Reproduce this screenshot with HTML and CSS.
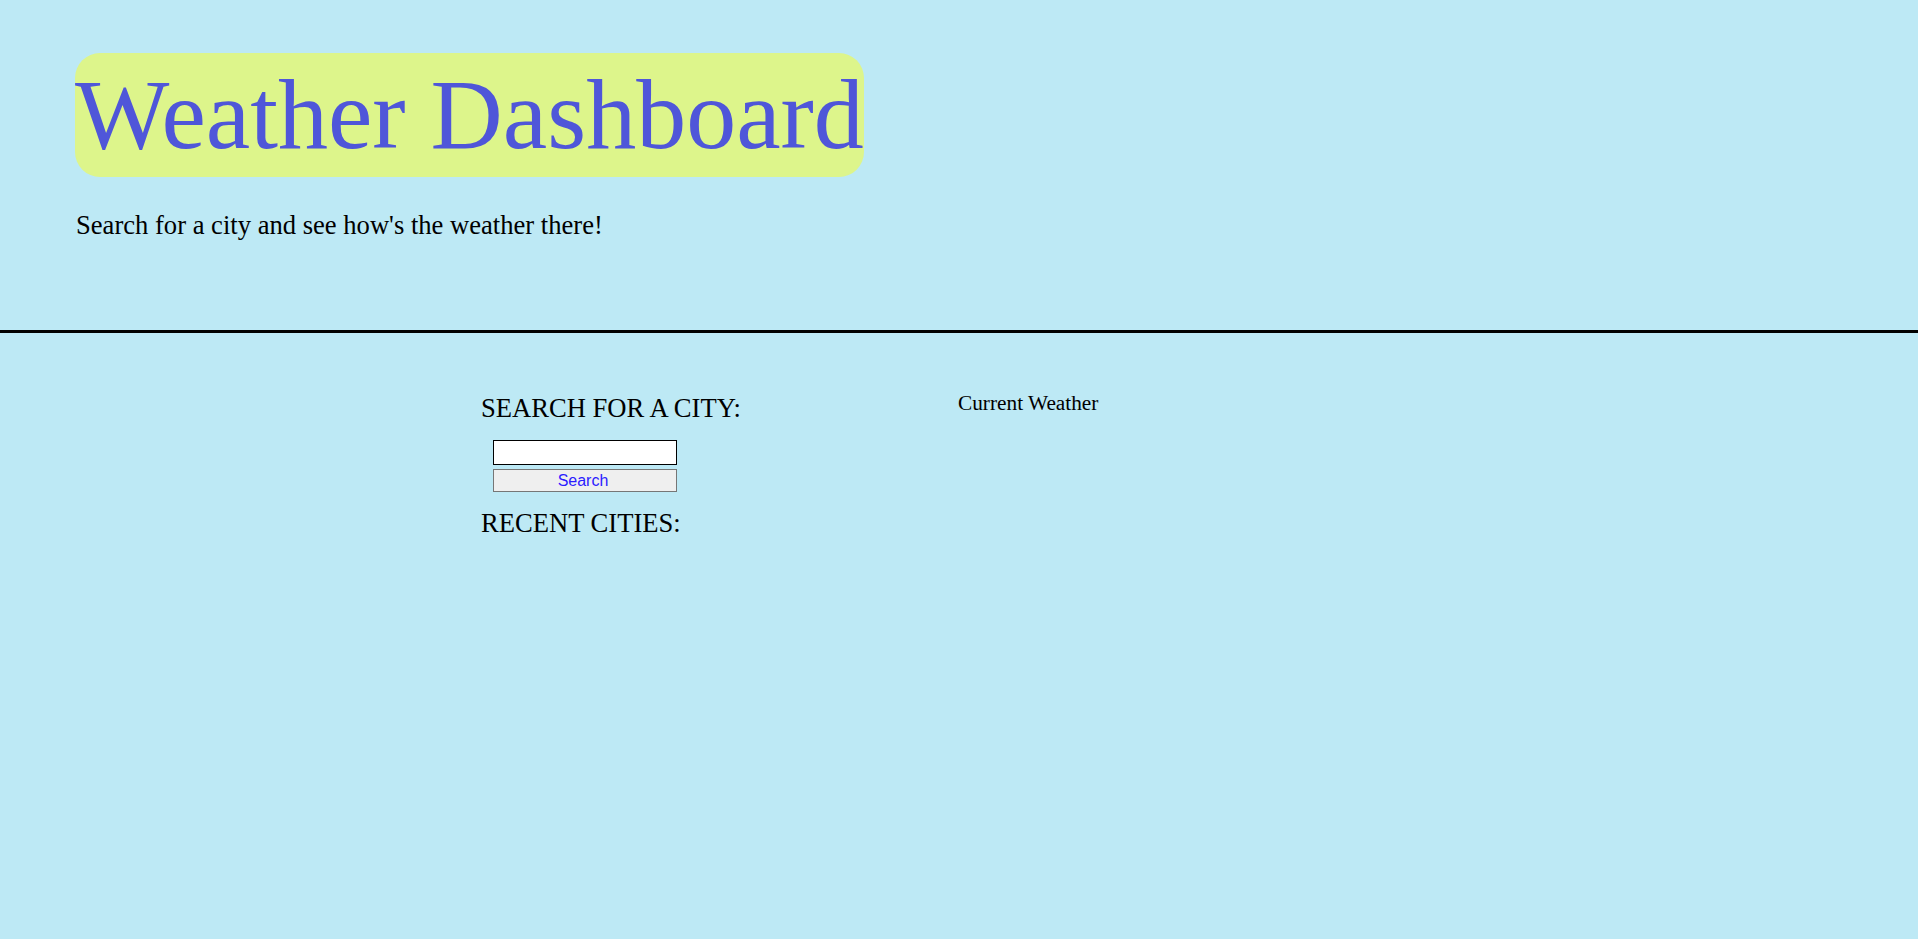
FILE: index.html
```html
<!DOCTYPE html>
<html lang="en">
<head>
<meta charset="utf-8">
<title>Weather Dashboard</title>
<link rel="stylesheet" href="styles.css">
</head>
<body>
<header class="hero">
  <h1 class="hero-title">Weather Dashboard</h1>
  <p class="hero-sub">Search for a city and see how's the weather there!</p>
</header>
<main class="content">
  <section class="search-panel">
    <h2 class="panel-heading">SEARCH FOR A CITY:</h2>
    <form class="search-form">
      <input class="city-input" type="text">
      <button class="search-btn" type="button">Search</button>
    </form>
    <h2 class="panel-heading">RECENT CITIES:</h2>
  </section>
  <section class="weather-panel">
    <h3 class="weather-heading">Current Weather</h3>
  </section>
</main>
</body>
</html>
```
FILE: styles.css
```css
html, body {
  margin: 0;
  padding: 0;
  background: #bde9f5;
  min-height: 100%;
  font-family: "Liberation Serif", "Times New Roman", serif;
  color: #000;
}

.hero {
  padding: 53px 0 89px 75px;
  border-bottom: 3px solid #000;
}

.hero-title {
  display: inline-block;
  margin: 0;
  font-size: 100px;
  font-weight: normal;
  line-height: 124px;
  color: #4f56d9;
  background: #ddf58b;
  border-radius: 25px;
}

.hero-sub {
  margin: 33px 0 0 1px;
  font-size: 26.6px;
}

.content {
  display: flex;
  align-items: flex-start;
  padding: 57px 0 0 481px;
}

.search-panel {
  width: 477px;
  padding-top: 3px;
}

.panel-heading {
  margin: 0;
  font-size: 26.6px;
  font-weight: normal;
}

.search-form {
  display: flex;
  flex-direction: column;
  align-items: flex-start;
  gap: 4px;
  margin: 16px 0 16px 12px;
}

.city-input {
  box-sizing: border-box;
  width: 184px;
  height: 25px;
  margin: 0;
  border: 1px solid #000;
  background: #fff;
  font-family: "Liberation Sans", Arial, sans-serif;
  font-size: 16px;
  padding: 1px 2px;
}

.search-btn {
  box-sizing: border-box;
  width: 184px;
  height: 23px;
  margin: 0;
  padding: 1px 4px 0 0;
  border: 1px solid #767676;
  background: #efefef;
  color: #2b1bff;
  font-family: "Liberation Sans", Arial, sans-serif;
  font-size: 16px;
  line-height: 20px;
}

.weather-panel {
  padding-top: 1px;
}

.weather-heading {
  margin: 0;
  font-size: 21.3px;
  font-weight: normal;
}
```
